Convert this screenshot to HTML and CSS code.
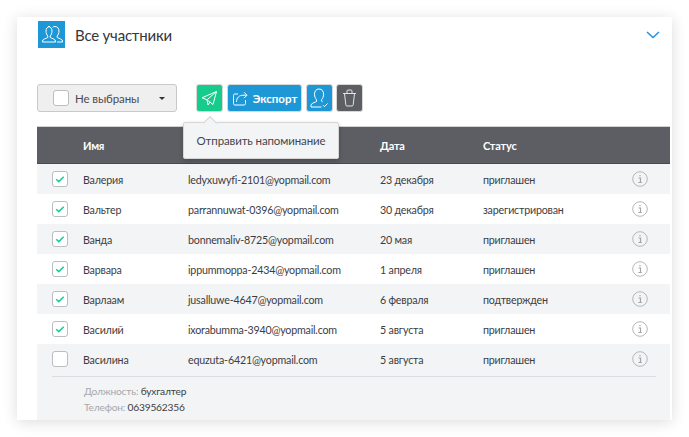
FILE: index.html
```html
<!DOCTYPE html>
<html lang="ru">
<head>
<meta charset="utf-8">
<title>Все участники</title>
<link rel="stylesheet" href="styles.css">
</head>
<body>
<svg class="defs" width="0" height="0" aria-hidden="true">
  <symbol id="info" viewBox="0 0 16 16">
    <circle cx="8" cy="8" r="7.3" fill="none" stroke="#b4b6b9" stroke-width="1"/>
    <path d="M6.6 7h1.900v4.200M6.400 11.500h3.400M8 3.900v1.400" fill="none" stroke="#a3a5a8" stroke-width="1.200"/>
  </symbol>
  <symbol id="tick" viewBox="0 0 16 16">
    <path d="M4.200 8.200l2.600 2.400 4.900-4.900" fill="none" stroke="#17cf8d" stroke-width="1.500"/>
  </symbol>
</svg>
<main class="card">
  <header class="head">
    <div class="head-left">
      <span class="head-icon">
        <svg width="27" height="27" viewBox="0 0 27 27" fill="none" stroke="#fff" stroke-width="1">
          <path d="M10 5.500c2.500 0 4 2 4 4.500 0 2.300-.8 3.800-1.800 5v1.500c1 .8 5.300 1.500 5.300 3.500v1h-13v-1c0-2 4.300-2.700 5.300-3.500V15c-1-1.200-1.800-2.700-1.800-5 0-2.500 1.500-4.500 4-4.500z"/>
          <path d="M14.600 6.300c.6-.5 1.400-.8 2.400-.8 2.500 0 4 2 4 4.500 0 2.300-.8 3.800-1.800 5v1.500c1 .8 5.300 1.500 5.300 3.500v1h-5.500"/>
        </svg>
      </span>
      <h1 class="title">Все участники</h1>
    </div>
    <svg class="chevron" width="14" height="8" viewBox="0 0 14 8" fill="none" stroke="#1e8fe8" stroke-width="1.400"><path d="M1 1l6 5.600L13 1"/></svg>
  </header>

  <div class="toolbar">
    <div class="select">
      <span class="box"></span>
      <span class="select-label">Не выбраны</span>
      <span class="caret"></span>
    </div>
    <div class="actions">
      <button class="btn btn-green" type="button">
        <svg width="17" height="17" viewBox="0 0 17 17" fill="none" stroke="#fff" stroke-width="1"><path d="M15.500 1.500L1 7.800l5 2 9.500-8.300zM15.500 1.500L12 14.500l-6-4.700 1 5.200 2-3.200"/></svg>
      </button>
      <button class="btn btn-blue btn-text" type="button">
        <svg width="16" height="15" viewBox="0 0 16 15" fill="none" stroke="#fff" stroke-width="1"><path d="M6 3H3C2 3 1.500 3.500 1.500 4.500v8C1.500 13.500 2 14 3 14h9c1 0 1.500-.5 1.500-1.500V9"/><path d="M4.500 11c0-4.500 3-6.800 6.500-6.800h3.500M12 1.200l3 3-3 3"/></svg>
        <span>Экспорт</span>
      </button>
      <button class="btn btn-blue btn-user" type="button">
        <svg width="19" height="20" viewBox="0 0 19 20" fill="none" stroke="#fff" stroke-width="1"><path d="M9 1c3 0 4.600 2.300 4.600 5.200 0 2.600-1 4.300-2 5.500v1.500l1 .6M6.500 11.700c-1-1.200-2-2.900-2-5.500C4.500 3.300 6 1 9 1M6.500 11.700v1.800c-1 .9-5.500 1.500-5.500 3.800V19h10.500"/><path d="M13 17.200l1.500 1.500 3-3.200"/></svg>
      </button>
      <button class="btn btn-dark" type="button">
        <svg width="15" height="18" viewBox="0 0 15 18" fill="none" stroke="#e4e4e6" stroke-width="1"><path d="M1 4.500h13M2.500 4.500l1.300 11.300c.1.800.5 1.200 1.200 1.200h5c.7 0 1.100-.4 1.200-1.200l1.300-11.300M5 4.500V2c0-.6.4-1 1-1h3c.6 0 1 .4 1 1v2.500"/></svg>
      </button>
      <div class="tooltip">Отправить напоминание</div>
    </div>
  </div>

  <section class="table">
    <div class="thead">
      <span></span>
      <span>Имя</span>
      <span></span>
      <span>Дата</span>
      <span>Статус</span>
      <span></span>
    </div>
    <div class="row alt"><span class="box checked"><svg width="16" height="16"><use href="#tick"/></svg></span><span>Валерия</span><span>ledyxuwyfi-2101@yopmail.com</span><span>23 декабря</span><span>приглашен</span><svg class="info" width="16" height="16"><use href="#info"/></svg></div>
    <div class="row"><span class="box checked"><svg width="16" height="16"><use href="#tick"/></svg></span><span>Вальтер</span><span>parrannuwat-0396@yopmail.com</span><span>30 декабря</span><span>зарегистрирован</span><svg class="info" width="16" height="16"><use href="#info"/></svg></div>
    <div class="row alt"><span class="box checked"><svg width="16" height="16"><use href="#tick"/></svg></span><span>Ванда</span><span>bonnemaliv-8725@yopmail.com</span><span>20 мая</span><span>приглашен</span><svg class="info" width="16" height="16"><use href="#info"/></svg></div>
    <div class="row"><span class="box checked"><svg width="16" height="16"><use href="#tick"/></svg></span><span>Варвара</span><span>ippummoppa-2434@yopmail.com</span><span>1 апреля</span><span>приглашен</span><svg class="info" width="16" height="16"><use href="#info"/></svg></div>
    <div class="row alt"><span class="box checked"><svg width="16" height="16"><use href="#tick"/></svg></span><span>Варлаам</span><span>jusalluwe-4647@yopmail.com</span><span>6 февраля</span><span>подтвержден</span><svg class="info" width="16" height="16"><use href="#info"/></svg></div>
    <div class="row"><span class="box checked"><svg width="16" height="16"><use href="#tick"/></svg></span><span>Василий</span><span>ixorabumma-3940@yopmail.com</span><span>5 августа</span><span>приглашен</span><svg class="info" width="16" height="16"><use href="#info"/></svg></div>
    <div class="expanded">
      <div class="row alt"><span class="box"></span><span>Василина</span><span>equzuta-6421@yopmail.com</span><span>5 августа</span><span>приглашен</span><svg class="info" width="16" height="16"><use href="#info"/></svg></div>
      <div class="details">
        <p class="detail"><span class="muted">Должность:</span> бухгалтер</p>
        <p class="detail"><span class="muted">Телефон:</span> 0639562356</p>
      </div>
    </div>
  </section>
</main>
</body>
</html>
```
FILE: styles.css
```css
* { box-sizing: border-box; }
html, body { margin: 0; height: 100%; overflow: hidden; background: #fff; }
body {
  padding: 17px;
  font-family: "Lato", "Noto Sans", sans-serif;
  color: #3c3d42;
  font-size: 10.700px;
  letter-spacing: -.2px;
}
.defs { position: absolute; }
.card {
  height: 403px;
  background: #fff;
  box-shadow: 0 2px 14px rgba(0, 0, 0, .14);
  padding: 4px 2px 0 20px;
  overflow: hidden;
}
.head { display: flex; justify-content: space-between; align-items: center; height: 27px; padding: 0 10px 0 1px; }
.head-left { display: flex; align-items: center; gap: 10px; }
.head-icon { display: flex; width: 27px; height: 27px; background: #1d97d6; }
.title { margin: 0; font-size: 15px; font-weight: 400; color: #35363a; }
.chevron { margin-top: 0; }

.toolbar { display: flex; align-items: flex-start; margin-top: 36px; height: 42px; gap: 19px; }
.select {
  display: flex; align-items: center; width: 140px; height: 28px;
  padding: 0 11px 0 15px; gap: 6px;
  background: #efefef; border: 1px solid #c9c9c9; border-radius: 3px;
  font-size: 11.500px; letter-spacing: -.1px; color: #4a4b50;
}
.select-label { flex: 1; }
.caret { border: 3px solid transparent; border-top: 3.500px solid #333; border-bottom: 0; }
.box {
  display: block; width: 16px; height: 16px; flex: none;
  background: #fff; border: 1px solid #bcbdc0; border-radius: 3px;
}
.box svg { display: block; margin: -1px; }
.actions { position: relative; display: flex; gap: 4px; }
.btn {
  display: flex; align-items: center; justify-content: center; gap: 5px;
  width: 27px; height: 28px; padding: 0; border: 1px solid #d8d8d8; border-radius: 3px;
  color: #fff; font: 700 11.500px "Lato", "Noto Sans", sans-serif;
}
.btn-green { background: #16cc8c; }
.btn-blue { background: #1d97d6; }
.btn-dark { background: #5d5e63; }
.btn-text { width: 75px; }
.btn-user { margin-right: -1px; }
.tooltip {
  position: absolute; left: -13px; top: 38px; width: 156px; height: 37px;
  display: flex; align-items: center; justify-content: center;
  background: #f3f4f6; border: 1px solid #d6d6d6; border-radius: 2px;
  box-shadow: 0 2px 5px rgba(0, 0, 0, .2);
  font-size: 11.500px; letter-spacing: -.12px; color: #45464b; z-index: 2;
}
.tooltip::before {
  content: ""; position: absolute; left: 21px; top: -5px; width: 9px; height: 9px;
  background: #f3f4f6; border: 1px solid #d6d6d6; border-width: 1px 0 0 1px;
  transform: rotate(45deg);
}

.table { display: block; }
.thead, .row {
  display: grid;
  grid-template-columns: 31px 105px 192px 103px 149px 16px;
  align-items: center;
  padding-left: 15px;
}
.thead {
  height: 38px; background: #5d5e63; color: #fff; font-weight: 700; font-size: 11px;
  border-top: 1px solid #d3d3d5; border-bottom: 1px solid #49494d;
}
.row { height: 30px; }
.alt { background: #f3f4f6; }
.expanded { background: #f3f4f6; height: 80px; }
.expanded .row { background: none; }
.info { display: block; }
.details { margin: 2px 14px 0 15px; padding-top: 6px; border-top: 1px solid #dcdde0; }
.detail { margin: 0 0 0 32px; line-height: 16px; font-size: 10.200px; color: #3c3d42; }
.muted { color: #a6a8ab; }
```
